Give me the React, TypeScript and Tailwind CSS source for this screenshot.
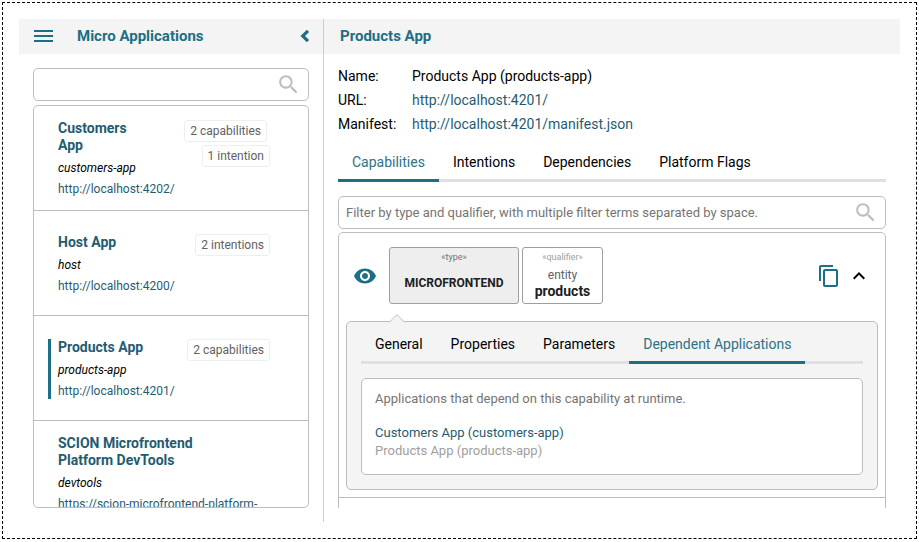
import { MdContentCopy, MdExpandLess, MdSearch, MdVisibility } from 'react-icons/md';

type AppEntry = {
  name: string;
  symbolicName: string;
  url: string;
  badges: string[];
  active?: boolean;
};

const apps: AppEntry[] = [
  { name: 'Customers App', symbolicName: 'customers-app', url: 'http://localhost:4202/', badges: ['2 capabilities', '1 intention'] },
  { name: 'Host App', symbolicName: 'host', url: 'http://localhost:4200/', badges: ['2 intentions'] },
  { name: 'Products App', symbolicName: 'products-app', url: 'http://localhost:4201/', badges: ['2 capabilities'], active: true },
  {
    name: 'SCION Microfrontend Platform DevTools',
    symbolicName: 'devtools',
    url: 'https://scion-microfrontend-platform-devtools.vercel.app',
    badges: [],
  },
];

function Tabs({ label, items, selected }: { label: string; items: string[]; selected: string }) {
  return (
    <div role="tablist" aria-label={label} className="flex border-b-3 border-[#e0e0e0]">
      {items.map((item) => (
        <button
          key={item}
          type="button"
          role="tab"
          aria-selected={item === selected}
          className={
            item === selected
              ? '-mb-[3px] border-b-3 border-[#1c6f84] px-3.5 pt-2 pb-[7px] leading-5 text-[#2d7389]'
              : 'px-3.5 pt-2 pb-[7px] leading-5'
          }
        >
          {item}
        </button>
      ))}
    </div>
  );
}

function FilterField({ label, placeholder }: { label: string; placeholder?: string }) {
  return (
    <div className="flex h-[33px] shrink-0 items-center rounded-[5px] border border-[#bdbdbd] pr-[7px]">
      <input
        type="text"
        aria-label={label}
        placeholder={placeholder}
        className="h-full min-w-0 flex-1 bg-transparent px-[7px] text-[13px] outline-none placeholder:text-[#757575]"
      />
      <MdSearch aria-hidden="true" className="size-[25px] text-[#bdbdbd]" />
    </div>
  );
}

function AppItem({ app }: { app: AppEntry }) {
  return (
    <li className="flex min-h-[105px] items-center border-b border-[#bdbdbd] pt-3.5 pr-[38px] pb-[13px] pl-3.5">
      <div
        className={
          app.active
            ? 'flex w-full gap-3 border-l-3 border-[#1c6f84] pl-[7px]'
            : 'flex w-full gap-3 border-l-3 border-transparent pl-[7px]'
        }
      >
        <div className="flex min-w-0 flex-1 flex-col gap-1.5">
          <h2 className="pr-5 pb-px leading-[17px] font-bold text-[#1f5c72]">{app.name}</h2>
          <p className="text-xs leading-[15px] italic">{app.symbolicName}</p>
          <a href={app.url} className="text-xs leading-[15px] text-[#1f5c72]">
            {app.url}
          </a>
        </div>
        <div className="flex shrink-0 flex-col items-end gap-[3px]">
          {app.badges.map((badge) => (
            <span
              key={badge}
              className="rounded-[3px] border border-[#eeeeee] px-[5px] text-xs leading-5 text-[#616161] not-last:mr-[3px]"
            >
              {badge}
            </span>
          ))}
        </div>
      </div>
    </li>
  );
}

function Sidebar() {
  return (
    <aside className="flex w-[305px] shrink-0 flex-col border-r border-[#cccccc]">
      <header className="flex h-[35px] shrink-0 items-center bg-[#f4f4f4] pr-3 pl-[15px] text-[#1c6f84]">
        <button type="button" aria-label="Menu" className="pb-0.5">
          <svg viewBox="0 0 19 12" className="h-3 w-[19px]" fill="currentColor" aria-hidden="true">
            <path d="M0 0h19v2H0zM0 5h19v2H0zM0 10h19v2H0z" />
          </svg>
        </button>
        <h1 className="ml-6 flex-1 text-[15px] font-bold">Micro Applications</h1>
        <button type="button" aria-label="Collapse" className="pb-0.5">
          <svg viewBox="0 0 12 14" className="h-3.5 w-3" fill="none" stroke="currentColor" strokeWidth="3.2" aria-hidden="true">
            <path d="M9 1.8 3.7 7 9 12.2" />
          </svg>
        </button>
      </header>
      <div className="flex min-h-0 flex-1 flex-col gap-1 p-3.5">
        <FilterField label="Filter applications" />
        <ul className="min-h-0 flex-1 overflow-hidden rounded-[5px] border border-[#bdbdbd]">
          {apps.map((app) => (
            <AppItem key={app.name} app={app} />
          ))}
        </ul>
      </div>
    </aside>
  );
}

function Capability() {
  return (
    <li className="border-b border-[#bdbdbd] px-[7px] pt-3.5 pb-[7px]">
      <div className="flex items-center px-[7px]">
        <MdVisibility aria-hidden="true" className="mr-3 size-6 text-[#1c6f84]" />
        <div className="flex h-[57px] gap-[3px] text-center">
          <div className="flex w-[130px] flex-col rounded-[3px] border border-[#9e9e9e] bg-[#eeeeee] pt-1">
            <span className="text-[9px] leading-[11px] text-[#757575]">«type»</span>
            <span className="flex flex-1 items-center justify-center text-xs font-bold text-[#212121]">MICROFRONTEND</span>
          </div>
          <div className="flex w-[81px] flex-col rounded-[3px] border border-[#9e9e9e] pt-1">
            <span className="text-[9px] leading-[11px] text-[#9e9e9e]">«qualifier»</span>
            <span className="pt-1 text-xs leading-4 text-[#616161]">entity</span>
            <span className="leading-4 font-bold text-[#212121]">products</span>
          </div>
        </div>
        <button type="button" aria-label="Copy" className="ml-auto text-[#1c6f84]">
          <MdContentCopy className="size-6" />
        </button>
        <button type="button" aria-label="Collapse details" className="ml-1.5">
          <MdExpandLess className="size-6" />
        </button>
      </div>
      <div className="relative mt-[17px] rounded-[5px] border border-[#bdbdbd] bg-[#f4f4f4] p-3.5 pt-1">
        <svg viewBox="0 0 16 9" className="absolute -top-2 left-[42px] h-[9px] w-4" aria-hidden="true">
          <path d="M0 8.500 8 .7 16 8.500V9H0z" fill="#f4f4f4" />
          <path d="M.5 8 8 .7 15.500 8" fill="none" stroke="#bdbdbd" />
        </svg>
        <Tabs
          label="Capability details"
          items={['General', 'Properties', 'Parameters', 'Dependent Applications']}
          selected="Dependent Applications"
        />
        <div className="mt-3.5 h-[97px] rounded-[5px] border border-[#bdbdbd] bg-white p-[13px] pt-[11px] text-[13px] leading-[18px]">
          <p className="text-[#757575]">Applications that depend on this capability at runtime.</p>
          <ul className="mt-4">
            <li>
              <a href="#customers-app" className="text-[#1f5c72]">
                Customers App (customers-app)
              </a>
            </li>
            <li className="text-[#9e9e9e]">Products App (products-app)</li>
          </ul>
        </div>
      </div>
    </li>
  );
}

function Details() {
  return (
    <main className="flex min-w-0 flex-1 flex-col">
      <header className="flex h-[35px] shrink-0 items-center bg-[#f4f4f4] px-4">
        <h1 className="text-[15px] font-bold text-[#1c6f84]">Products App</h1>
      </header>
      <div className="flex min-h-0 flex-1 flex-col px-3.5 pt-2.5 pb-3.5">
        <dl className="grid grid-cols-[74px_1fr] leading-6">
          <dt>Name:</dt>
          <dd>Products App (products-app)</dd>
          <dt>URL:</dt>
          <dd>
            <a href="http://localhost:4201/" className="text-[#1f5c72]">
              http://localhost:4201/
            </a>
          </dd>
          <dt>Manifest:</dt>
          <dd>
            <a href="http://localhost:4201/manifest.json" className="text-[#1f5c72]">
              http://localhost:4201/manifest.json
            </a>
          </dd>
        </dl>
        <div className="mt-2 mb-3.5">
          <Tabs
            label="Application details"
            items={['Capabilities', 'Intentions', 'Dependencies', 'Platform Flags']}
            selected="Capabilities"
          />
        </div>
        <FilterField
          label="Filter capabilities"
          placeholder="Filter by type and qualifier, with multiple filter terms separated by space."
        />
        <div className="mt-[3px] min-h-0 flex-1 overflow-hidden">
          <ul className="min-h-80 rounded-[5px] border border-[#bdbdbd]">
            <Capability />
          </ul>
        </div>
      </div>
    </main>
  );
}

export default function App() {
  return (
    <div className="h-screen bg-white px-0.5 pt-0.5 pb-[3px] font-[Roboto,sans-serif] text-sm text-black">
      <div className="flex h-full border border-dashed border-black p-4">
        <Sidebar />
        <Details />
      </div>
    </div>
  );
}
